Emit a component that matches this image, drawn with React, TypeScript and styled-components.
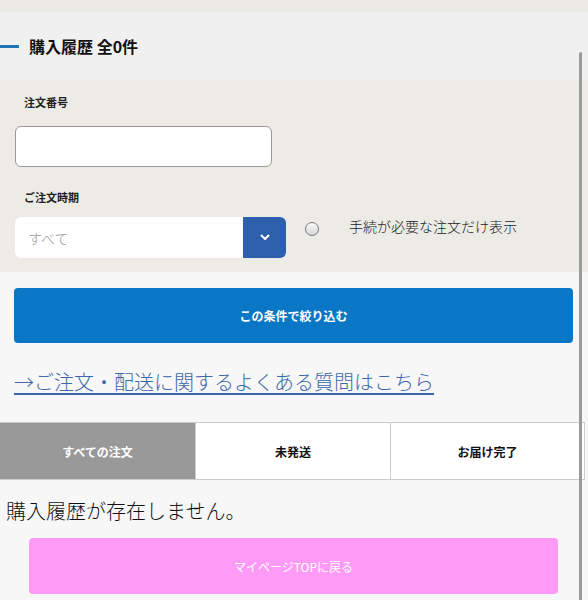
import styled, { createGlobalStyle } from 'styled-components';

const GlobalStyle = createGlobalStyle`
  body {
    margin: 0;
    background: #f7f7f7;
    font-family: "Noto Sans CJK JP", "Noto Sans", sans-serif;
    color: #222;
  }
`;

const Page = styled.div`
  position: relative;
  width: 588px;
  height: 600px;
  overflow: hidden;
  background: #f7f7f7;
`;

const TopStrip = styled.div`
  height: 12px;
  background: #ebeae5;
  box-shadow: 0 1px 2px rgba(0, 0, 0, 0.04);
`;

const Header = styled.div`
  height: 68px;
  display: flex;
  align-items: center;
  background: #f0f0f0;
`;

const HeaderBar = styled.span`
  width: 19px;
  height: 3px;
  background: #1f74b5;
`;

const Title = styled.h1`
  margin: 0 0 0 10px;
  font-size: 16px;
  font-weight: 700;
  color: #111;
`;

const FilterForm = styled.div`
  background: #ecebe6;
  padding: 15px 14px 14px 15px;
`;

const FieldLabel = styled.div<{ $gap: number }>`
  font-size: 11px;
  line-height: 14px;
  font-weight: 700;
  padding-left: 9px;
  margin-bottom: ${(p) => p.$gap}px;
`;

const TextInput = styled.div`
  width: 257px;
  height: 41px;
  box-sizing: border-box;
  background: #fff;
  border: 1px solid #999;
  border-radius: 6px;
  margin-bottom: 23px;
`;

const SelectRow = styled.div`
  display: flex;
  align-items: flex-start;
`;

const Select = styled.div`
  display: flex;
  width: 271px;
  height: 41px;
  border-radius: 6px;
  overflow: hidden;
`;

const SelectValue = styled.div`
  flex: 1;
  display: flex;
  align-items: center;
  padding-left: 13px;
  background: #fff;
  font-size: 14px;
  font-weight: 300;
  color: #999;
`;

const SelectArrow = styled.div`
  width: 43px;
  display: flex;
  align-items: center;
  justify-content: center;
  background: #2d5fad;
`;

const Radio = styled.span`
  width: 14px;
  height: 14px;
  box-sizing: border-box;
  margin: 5px 0 0 19px;
  border: 1px solid #777;
  border-radius: 50%;
  background: linear-gradient(#fafafa, #d6d6d6);
`;

const RadioLabel = styled.span`
  margin: 0 0 0 30px;
  font-size: 14px;
  line-height: 18px;
  font-weight: 300;
  color: #222;
`;

const Content = styled.div`
  padding: 16px 0 0;
`;

const SubmitButton = styled.button`
  display: block;
  width: 559px;
  height: 55px;
  margin: 0 0 0 14px;
  border: none;
  border-radius: 4px;
  background: #0a77c6;
  color: #fff;
  font-family: inherit;
  font-size: 12px;
  font-weight: 700;
`;

const FaqLink = styled.a`
  display: inline-block;
  margin: 27px 0 0 14px;
  font-size: 20px;
  line-height: 24px;
  font-weight: 300;
  color: #3d67aa;
  text-decoration: underline;
  text-underline-offset: 3px;
`;

const Tabs = styled.div`
  display: grid;
  grid-template-columns: 196px 195px 194px;
  width: 585px;
  margin-top: 27px;
  border-top: 1px solid #ccc;
  border-bottom: 1px solid #ccc;
`;

const Tab = styled.div<{ $active?: boolean }>`
  height: 56px;
  display: flex;
  align-items: center;
  justify-content: center;
  font-size: 12px;
  font-weight: 700;
  background: ${(p) => (p.$active ? '#999' : '#fff')};
  color: ${(p) => (p.$active ? '#fff' : '#111')};
  border-right: 1px solid #ccc;
  box-sizing: border-box;
`;

const EmptyMessage = styled.p`
  margin: 19px 0 0 6px;
  font-size: 20px;
  line-height: 24px;
  font-weight: 300;
  color: #111;
`;

const BackButton = styled.button`
  display: block;
  width: 529px;
  height: 56px;
  margin: 15px 0 0 29px;
  border: none;
  border-radius: 4px;
  background: #ff9bf6;
  color: #fff;
  font-family: inherit;
  font-size: 12px;
`;

const ScrollThumb = styled.div`
  position: absolute;
  left: 579px;
  top: 52px;
  width: 3px;
  bottom: 0;
  border-radius: 2px 2px 0 0;
  background: #9a9a9a;
`;

const Chevron = () => (
  <svg width="10" height="7" viewBox="0 0 10 7">
    <path d="M1.5 1.5 L5 5 L8.5 1.5" fill="none" stroke="#fff" strokeWidth="2" strokeLinecap="round" strokeLinejoin="round" />
  </svg>
);

const App = () => {
  return (
    <>
      <GlobalStyle />
      <Page>
        <TopStrip />
        <Header>
          <HeaderBar />
          <Title>購入履歴 全0件</Title>
        </Header>
        <FilterForm>
          <FieldLabel $gap={17}>注文番号</FieldLabel>
          <TextInput />
          <FieldLabel $gap={13}>ご注文時期</FieldLabel>
          <SelectRow>
            <Select>
              <SelectValue>すべて</SelectValue>
              <SelectArrow>
                <Chevron />
              </SelectArrow>
            </Select>
            <Radio />
            <RadioLabel>手続が必要な注文だけ表示</RadioLabel>
          </SelectRow>
        </FilterForm>
        <Content>
          <SubmitButton>この条件で絞り込む</SubmitButton>
          <FaqLink>→ご注文・配送に関するよくある質問はこちら</FaqLink>
          <Tabs>
            <Tab $active>すべての注文</Tab>
            <Tab>未発送</Tab>
            <Tab>お届け完了</Tab>
          </Tabs>
          <EmptyMessage>購入履歴が存在しません。</EmptyMessage>
          <BackButton>マイページTOPに戻る</BackButton>
        </Content>
        <ScrollThumb />
      </Page>
    </>
  );
};

export default App;
